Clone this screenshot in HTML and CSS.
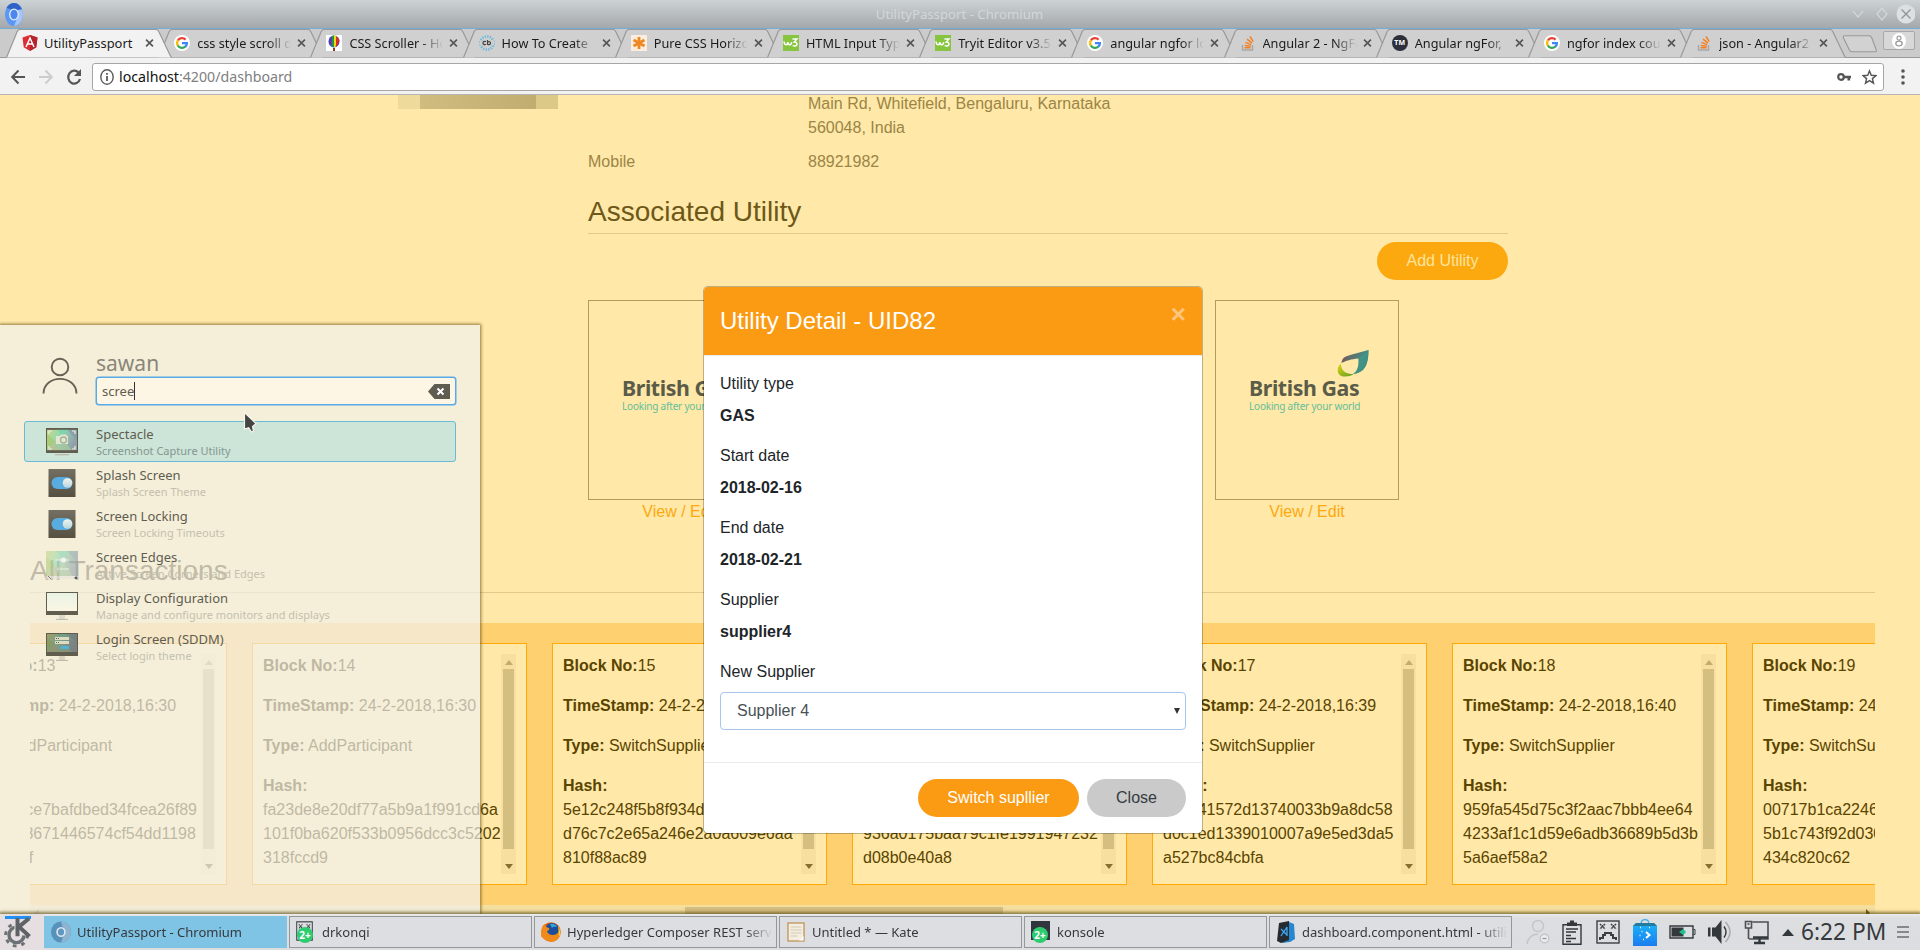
FILE: index.html
```html
<!DOCTYPE html>
<html lang="en">
<head>
<meta charset="utf-8">
<title>UtilityPassport - Chromium</title>
<link rel="stylesheet" href="styles.css">
</head>
<body>
<svg class="defs" width="0" height="0">
  <defs>
    <linearGradient id="leafTop" x1="0" y1="0" x2="1" y2=".4"><stop offset=".2" stop-color="#6d625f"/><stop offset=".75" stop-color="#4a8880"/><stop offset="1" stop-color="#3d7a72"/></linearGradient>
    <linearGradient id="leafLow" x1="0" y1="0" x2="1" y2="1"><stop offset="0" stop-color="#e0d613"/><stop offset="1" stop-color="#5c9a22"/></linearGradient>
    <linearGradient id="wall" x1="0" y1="0" x2="1" y2=".4"><stop offset="0" stop-color="#ccd57f"/><stop offset=".45" stop-color="#93d9b5"/><stop offset="1" stop-color="#92a0a9"/></linearGradient>
    <linearGradient id="dark" x1="0" y1="0" x2="0" y2="1"><stop offset="0" stop-color="#736f62"/><stop offset="1" stop-color="#555041"/></linearGradient>
    <linearGradient id="knob" x1="0" y1="0" x2="0" y2="1"><stop offset="0" stop-color="#f2f4ec"/><stop offset="1" stop-color="#b9d6dd"/></linearGradient>
    <linearGradient id="glass" x1="0" y1="0" x2="0" y2="1"><stop offset="0" stop-color="#e9f3e4"/><stop offset="1" stop-color="#fbf6e4"/></linearGradient>
    <linearGradient id="bag" x1="0" y1="0" x2="0" y2="1"><stop offset="0" stop-color="#1cb4f8"/><stop offset="1" stop-color="#1a7df0"/></linearGradient>
  </defs>
  <symbol id="tab" viewBox="0 0 166 29"><path d="M0.5 28.5 L11 3 Q12 .5 14 .5 H150 Q152 .5 153 3 L164 26 Q165 28.5 166 28.5" stroke="#999" stroke-width="1.2"/></symbol>
  <symbol id="x" viewBox="0 0 10 10"><path d="M1.2 1.2l7.6 7.6M8.8 1.2L1.2 8.8" stroke="#555" stroke-width="1.8"/></symbol>
  <symbol id="google" viewBox="0 0 16 16"><circle cx="8" cy="8" r="8" fill="#fff"/><g fill="none" stroke-width="2.3"><path d="M3.9 5.4A4.9 4.9 0 0 1 11.6 4.6" stroke="#ea4335"/><path d="M3.9 5.3a4.9 4.9 0 0 0 0 5.4" stroke="#fbbc05"/><path d="M3.8 10.5a4.9 4.9 0 0 0 7.6 1" stroke="#34a853"/><path d="M8 8.1h4.9a4.9 4.9 0 0 1-1.6 3.5" stroke="#4285f4"/></g></symbol>
  <symbol id="w3" viewBox="0 0 16 16"><rect width="16" height="16" fill="#87c540"/><path d="M1 6.5q.4 3.2 2 3.2t1.8-2.6q.2 2.6 1.8 2.6t2.2-2.5M9.5 4h4.4l-2.6 3q3 0 2.6 2.7-1.6 2.2-4.2.6" fill="none" stroke="#fff" stroke-width="1.5"/></symbol>
  <symbol id="so" viewBox="0 0 16 16"><path d="M2.5 10v5h10v-5" fill="none" stroke="#a5a8ab" stroke-width="1.4"/><path d="M4.5 12.8h6M4.7 10.4l6 .9M5.4 7.4l5.7 2.2M7 4.2l5 4M10 1.5l3.2 5.2" stroke="#f48024" stroke-width="1.5"/></symbol>
  <symbol id="toggle" viewBox="0 0 27 28"><rect width="27" height="28" fill="url(#dark)"/><rect x="3" y="8" width="21" height="12" rx="6" fill="#58ace0"/><circle cx="19" cy="14" r="4.8" fill="url(#knob)"/></symbol>
  <symbol id="wallpaper" viewBox="0 0 30 22" preserveAspectRatio="none"><rect width="30" height="22" fill="url(#wall)"/><path d="M0 5l8 7-8 10z" fill="#a9c763" opacity=".6"/><path d="M10 0l5 7 7-7z" fill="#78d3ac" opacity=".8"/><path d="M20 0l10 11V0z" fill="#8298a8" opacity=".7"/><path d="M8 22l8-12 9 12z" fill="#a8ca9c" opacity=".7"/><path d="M0 22l8-10 3 10z" fill="#d5b177" opacity=".5"/></symbol>
  <symbol id="pixelface" viewBox="0 0 24 24"><rect x="1" y="1" width="22" height="22" fill="none" stroke="#3a3f43" stroke-width="1.4"/><path d="M4 4l5 5M9 4L4 9M15 4l5 5M20 4l-5 5" stroke="#3a3f43" stroke-width="1.5" stroke-dasharray="1.8 .5"/><path d="M4 20v-2h3v-3h2v-2h6v2h2v3h3v2" fill="none" stroke="#3a3f43" stroke-width="2"/></symbol>
  <symbol id="leaf" viewBox="0 0 32 27"><path d="M4.5 13C5 8 8 6.500 14 4.800L31.500 0C31.500 14 28 23 16 24c5-3 6-9 5.500-15.500C14 9 9 11 4.500 13z" fill="url(#leafTop)"/><path d="M31.400 0C31.500 14 28 23 16 24c5-3 6-9 5.500-15.500z" fill="#419a8b" opacity=".65"/><path d="M4 13.500C-1.500 18 0 27 8 26.500c4 0 7-1 9-2.700C10 25 3.500 21 4 13.500z" fill="url(#leafLow)"/></symbol>
</svg>

<header class="titlebar">
  <svg class="app-icon" width="18" height="23" viewBox="0 0 18 23" preserveAspectRatio="none"><ellipse cx="9" cy="11.500" rx="9" ry="11.500" fill="#5b97f5"/><path d="M1.500 5A9 11.500 0 0 1 17 6.500L9 7z" fill="#2f62c8"/><path d="M17 6.500A9 11.500 0 0 1 9 23L13 13V7z" fill="#a5c5fb"/><ellipse cx="9" cy="11.500" rx="4.300" ry="5.400" fill="#4c87ee" stroke="#e3edfd" stroke-width="1.300"/></svg>
  <h1>UtilityPassport - Chromium</h1>
  <svg class="window-buttons" width="66" height="22" viewBox="0 0 66 22"><path d="M4 8l5 6 5-6M28 11l5-6 5 6-5 6z" fill="none" stroke="#d3d7da" stroke-width="1.200"/><circle cx="57" cy="11" r="9.500" fill="#dde0e2"/><path d="M52.500 6.500l9 9M61.500 6.500l-9 9" stroke="#8d9296" stroke-width="1.200"/></svg>
</header>

<nav class="tabs">
  <div class="tab active"><svg class="shape"><use href="#tab"/></svg><svg class="fav" viewBox="0 0 16 16"><path d="M8 0l7.500 2.600-1.200 9.600L8 16l-6.300-3.800L.5 2.600z" fill="#dd2c33"/><path d="M8 0l7.500 2.600-1.200 9.600L8 16z" fill="#b5232c"/><path d="M4 12L8 3l4 9M5.600 9h4.800" fill="none" stroke="#fff" stroke-width="1.500"/></svg><span>UtilityPassport</span><svg class="x"><use href="#x"/></svg></div>
  <div class="tab"><svg class="shape"><use href="#tab"/></svg><svg class="fav"><use href="#google"/></svg><span>css style scroll d</span><svg class="x"><use href="#x"/></svg></div>
  <div class="tab"><svg class="shape"><use href="#tab"/></svg><svg class="fav" viewBox="0 0 16 16"><rect width="16" height="16" fill="#fff"/><ellipse cx="8" cy="6.500" rx="5.500" ry="6" fill="#2b54d4"/><path d="M4 2.500h2v8L3 9z" fill="#7a27b0"/><path d="M6 .8h2v11.600L5.500 11z" fill="#1c9c3d"/><path d="M8 .5h2.500l-.5 11-2 1z" fill="#f4d91d"/><path d="M10.300 1L13.500 5 12 9.500 9.800 12z" fill="#df2a1c"/><path d="M7 13h2v3H7z" fill="#8a3f18"/></svg><span>CSS Scroller - Ho</span><svg class="x"><use href="#x"/></svg></div>
  <div class="tab"><svg class="shape"><use href="#tab"/></svg><svg class="fav" viewBox="0 0 16 16"><circle cx="8" cy="8" r="6.600" fill="none" stroke="#5fb8dd" stroke-width="2.600" stroke-dasharray="1.200 1.400"/><path d="M1 6h14v4H1z" fill="#cfcfcf"/><path d="M7 6.500q-3-.5-3 1.500t3 1.500M8.500 5v4.500q3 .5 3-1.500T8.500 7" fill="none" stroke="#444" stroke-width="1.200"/></svg><span>How To Create </span><svg class="x"><use href="#x"/></svg></div>
  <div class="tab"><svg class="shape"><use href="#tab"/></svg><svg class="fav" viewBox="0 0 16 16"><rect width="16" height="16" fill="#fbeede"/><path d="M8 2v12M2.500 5l11 6M13.500 5l-11 6" stroke="#ee8822" stroke-width="2.800"/></svg><span>Pure CSS Horizo</span><svg class="x"><use href="#x"/></svg></div>
  <div class="tab"><svg class="shape"><use href="#tab"/></svg><svg class="fav"><use href="#w3"/></svg><span>HTML Input Type</span><svg class="x"><use href="#x"/></svg></div>
  <div class="tab"><svg class="shape"><use href="#tab"/></svg><svg class="fav"><use href="#w3"/></svg><span>Tryit Editor v3.5</span><svg class="x"><use href="#x"/></svg></div>
  <div class="tab"><svg class="shape"><use href="#tab"/></svg><svg class="fav"><use href="#google"/></svg><span>angular ngfor lo</span><svg class="x"><use href="#x"/></svg></div>
  <div class="tab"><svg class="shape"><use href="#tab"/></svg><svg class="fav"><use href="#so"/></svg><span>Angular 2 - NgFo</span><svg class="x"><use href="#x"/></svg></div>
  <div class="tab"><svg class="shape"><use href="#tab"/></svg><i class="fav tm">TM</i><span>Angular ngFor, </span><svg class="x"><use href="#x"/></svg></div>
  <div class="tab"><svg class="shape"><use href="#tab"/></svg><svg class="fav"><use href="#google"/></svg><span>ngfor index cou</span><svg class="x"><use href="#x"/></svg></div>
  <div class="tab"><svg class="shape"><use href="#tab"/></svg><svg class="fav"><use href="#so"/></svg><span>json - Angular2 </span><svg class="x"><use href="#x"/></svg></div>
  <svg class="newtab" width="36" height="18" viewBox="0 0 36 18"><path d="M3 .7h24q2 0 2.700 2l4.500 12q.8 2-1.200 2H10q-2 0-2.700-2L1.300 2.700Q.7.700 3 .7z" fill="#d2d2d2" stroke="#999" stroke-width="1.100"/></svg>
  <div class="profile-btn"><svg width="14" height="16" viewBox="0 0 14 16"><ellipse cx="7" cy="8" rx="7" ry="8" fill="#fff"/><circle cx="7" cy="5.200" r="2" fill="none" stroke="#9b9b9b" stroke-width="1.200"/><ellipse cx="7" cy="10.500" rx="3.200" ry="2.400" fill="none" stroke="#9b9b9b" stroke-width="1.300"/></svg></div>
</nav>

<div class="toolbar">
  <svg class="nav-icons" width="74" height="20" viewBox="0 0 74 20" fill="none" stroke-width="2"><path d="M14 10H1.500M7.500 3.500L1.200 10l6.300 6.500" stroke="#555"/><path d="M28 10h12.500M34.500 3.500l6.300 6.500-6.300 6.500" stroke="#ccc"/><path d="M67.500 5.500a6 6.500 0 1 0 1.500 6.500" stroke="#555" stroke-width="2.200"/><path d="M70 2v7h-7z" fill="#555"/></svg>
  <div class="urlbar">
    <svg width="14" height="16" viewBox="0 0 14 16" preserveAspectRatio="none"><ellipse cx="7" cy="8" rx="6.200" ry="7.200" fill="none" stroke="#5a5a5a" stroke-width="1.400"/><path d="M7 7v5M7 4v1.800" stroke="#5a5a5a" stroke-width="1.800"/></svg>
    <p>localhost<span>:4200/dashboard</span></p>
    <svg class="key" width="14" height="10" viewBox="0 0 14 10"><circle cx="4" cy="5" r="2.800" fill="none" stroke="#555" stroke-width="2.200"/><path d="M6.500 5H14M11.800 5v3.600" stroke="#555" stroke-width="2.600"/></svg>
    <svg class="star" width="15" height="16" viewBox="0 0 16 16"><path d="M8 1.500l1.900 4.700 5 .3-3.800 3.200 1.200 4.900L8 11.900l-4.300 2.700 1.200-4.900L1.100 6.500l5-.3z" fill="none" stroke="#555" stroke-width="1.500"/></svg>
  </div>
  <svg class="dots" width="4" height="16" viewBox="0 0 4 16" fill="#555"><circle cx="2" cy="2" r="1.800"/><circle cx="2" cy="8" r="1.800"/><circle cx="2" cy="14" r="1.800"/></svg>
</div>

<main class="page">
  <div class="profile">
    <div class="photo"></div>
    <dl class="details">
      <dt></dt><dd>Main Rd, Whitefield, Bengaluru, Karnataka<br>560048, India</dd>
      <dt>Mobile</dt><dd>88921982</dd>
    </dl>
  </div>
  <section class="utilities">
    <h2>Associated Utility</h2>
    <button class="btn add">Add Utility</button>
    <div class="utility-list">
      <div class="utility"><div class="logo"><div class="brand"><svg width="32" height="27"><use href="#leaf"/></svg><b>British Gas</b><small>Looking after your world</small></div></div><a>View / Edit</a></div>
      <div class="utility"><div class="logo"><div class="brand"><svg width="32" height="27"><use href="#leaf"/></svg><b>British Gas</b><small>Looking after your world</small></div></div><a>View / Edit</a></div>
    </div>
  </section>
  <section class="transactions">
    <h2>All Transactions</h2>
    <div class="strip">
      <div class="blocks">
        <article class="block"><div class="text"><p><b>Block No:</b>13</p><p><b>TimeStamp:</b> 24-2-2018,16:30</p><p><b>Type:</b> AddParticipant</p><p><b>Hash:</b><br>88e1a04ce7bafdbed34fcea26f89<br>c0b243d8671446574cf54dd1198<br>0ae26fc4f</p></div><div class="bar"><i></i></div></article>
        <article class="block"><div class="text"><p><b>Block No:</b>14</p><p><b>TimeStamp:</b> 24-2-2018,16:30</p><p><b>Type:</b> AddParticipant</p><p><b>Hash:</b><br>fa23de8e20df77a5b9a1f991cd6a<br>101f0ba620f533b0956dcc3c5202<br>318fccd9</p></div><div class="bar"><i></i></div></article>
        <article class="block"><div class="text"><p><b>Block No:</b>15</p><p><b>TimeStamp:</b> 24-2-2018,16:32</p><p><b>Type:</b> SwitchSupplier</p><p><b>Hash:</b><br>5e12c248f5b8f934d0b1c7a3e42<br>d76c7c2e65a246e2a0a609e6aa<br>810f88ac89</p></div><div class="bar"><i></i></div></article>
        <article class="block"><div class="text"><p><b>Block No:</b>16</p><p><b>TimeStamp:</b> 24-2-2018,16:35</p><p><b>Type:</b> SwitchSupplier</p><p><b>Hash:</b><br>7b31d6f08e52ac94be03d1f5c6<br>936a0175baa79c1fe1991947232<br>d08b0e40a8</p></div><div class="bar"><i></i></div></article>
        <article class="block"><div class="text"><p><b>Block No:</b>17</p><p><b>TimeStamp:</b> 24-2-2018,16:39</p><p><b>Type:</b> SwitchSupplier</p><p><b>Hash:</b><br>e80c41572d13740033b9a8dc58<br>d0c1ed1339010007a9e5ed3da5<br>a527bc84cbfa</p></div><div class="bar"><i></i></div></article>
        <article class="block"><div class="text"><p><b>Block No:</b>18</p><p><b>TimeStamp:</b> 24-2-2018,16:40</p><p><b>Type:</b> SwitchSupplier</p><p><b>Hash:</b><br>959fa545d75c3f2aac7bbb4ee64<br>4233af1c1d59e6adb36689b5d3b<br>5a6aef58a2</p></div><div class="bar"><i></i></div></article>
        <article class="block"><div class="text"><p><b>Block No:</b>19</p><p><b>TimeStamp:</b> 24-2-2018,16:42</p><p><b>Type:</b> SwitchSupplier</p><p><b>Hash:</b><br>00717b1ca2246e90f3d5b8ac17<br>5b1c743f92d030e6b8fa4c21de7<br>434c820c62</p></div><div class="bar"><i></i></div></article>
      </div>
      <div class="hbar"><i></i></div>
    </div>
  </section>
</main>

<div class="modal">
  <div class="modal-head"><h3>Utility Detail - UID82</h3><span>×</span></div>
  <div class="modal-body">
    <p>Utility type</p><b>GAS</b>
    <p>Start date</p><b>2018-02-16</b>
    <p>End date</p><b>2018-02-21</b>
    <p>Supplier</p><b>supplier4</b>
    <p>New Supplier</p>
    <div class="select"><span>Supplier 4</span><i></i></div>
  </div>
  <div class="modal-foot"><button class="btn switch">Switch supllier</button><button class="btn close">Close</button></div>
</div>

<aside class="launcher">
  <div class="user">
    <svg width="36" height="38" viewBox="0 0 36 38" fill="none" stroke="#666354" stroke-width="1.900"><circle cx="18" cy="10" r="8.300"/><path d="M1.500 36.500C2 17 34 17 34.500 36.500"/></svg>
    <div class="who"><strong>sawan</strong>
      <div class="search"><span>scree</span><svg width="22" height="15" viewBox="0 0 22 15"><path d="M0 7.500L6.500 0H22v15H6.500z" fill="#5f5d51"/><path d="M9.500 4.500l6 6M15.500 4.500l-6 6" stroke="#fff" stroke-width="2"/></svg></div>
    </div>
  </div>
  <ul class="results">
    <li class="selected"><svg width="32" height="28" viewBox="0 0 32 28"><rect width="32" height="25" fill="#615e50"/><svg x="1" y="1.500" width="30" height="21"><use href="#wallpaper"/></svg><path d="M3 6V3h3M26 3h3v3M3 18v3h3M29 18v3h-3" fill="none" stroke="#e8efda" stroke-width="1.200"/><path d="M10 8h4l1-1.500h5L21 8h1v8H10z" fill="#e6e6cf"/><circle cx="17.500" cy="12" r="3" fill="none" stroke="#9db59a" stroke-width="1.400"/><path d="M9 26.700h14" stroke="#b9b4a4" stroke-width="1.200"/></svg><div><b>Spectacle</b><small>Screenshot Capture Utility</small></div></li>
    <li><svg width="32" height="28"><use href="#toggle"/></svg><div><b>Splash Screen</b><small>Splash Screen Theme</small></div></li>
    <li><svg width="32" height="28"><use href="#toggle"/></svg><div><b>Screen Locking</b><small>Screen Locking Timeouts</small></div></li>
    <li><svg width="32" height="28" viewBox="0 0 32 28"><g opacity=".6"><svg width="32" height="25"><use href="#wallpaper"/></svg><path d="M0 25h32v3H0z" fill="#e5e4dc"/></g><path d="M9 9h14M11 18h12" stroke="#eef0e8" stroke-width="1.200"/><circle cx="17.500" cy="9" r="2.600" fill="#f2f3ec"/><circle cx="11.500" cy="18" r="2" fill="none" stroke="#c8ccb9"/><path d="M2 25l3 3M29 26h2v2h-2z" stroke="#777"/></svg><div><b>Screen Edges</b><small>Active Screen Corners and Edges</small></div></li>
    <li><svg width="32" height="28" viewBox="0 0 32 28"><rect width="32" height="23" fill="#615e50"/><rect x="1" y="1" width="30" height="18" fill="url(#glass)"/><path d="M13 23h6v4h-6z" fill="#dcd9cf"/><path d="M10 27.400h12" stroke="#bbb8ab"/></svg><div><b>Display Configuration</b><small>Manage and configure monitors and displays</small></div></li>
    <li><svg width="32" height="28" viewBox="0 0 32 28"><rect width="32" height="23" fill="#615e50"/><svg x="1" y="1" width="30" height="18" opacity=".55"><use href="#wallpaper"/></svg><path d="M9 4h14v3H9zM9 8h14v3H9z" fill="#dedbc5"/><path d="M15 13h8v3h-8z" fill="#4db2dc"/><path d="M10 5.500h4M10 9.500h4" stroke="#615e50" stroke-dasharray="1 1"/><path d="M13 23h6v4h-6z" fill="#dcd2bf"/><path d="M10 27.400h12" stroke="#b5b2a6"/></svg><div><b>Login Screen (SDDM)</b><small>Select login theme</small></div></li>
  </ul>
</aside>

<svg class="pointer" width="16" height="24" viewBox="0 0 16 24"><path d="M1.500 1.500V18l4.200-1.200 2.800 4.200 2-1-1-4.200L13 12.500z" fill="#454545" stroke="#f7f4e8" stroke-width="1.200"/></svg>

<footer class="taskbar">
  <div class="kicker"><svg width="28" height="33" viewBox="0 0 28 34" preserveAspectRatio="none"><ellipse cx="12.500" cy="20.500" rx="7.500" ry="8" fill="none" stroke="#6b7175" stroke-width="3.400"/><ellipse cx="12.500" cy="20.500" rx="10.800" ry="11.500" fill="none" stroke="#6b7175" stroke-width="3" stroke-dasharray="3.700 5"/><path d="M10.500 4.500h16V21h-16z" fill="#e6dfe1"/><path d="M13.500 3v19M25 3.500L15 12l10.500 10" fill="none" stroke="#5c6266" stroke-width="4"/></svg></div>
  <div class="tasks">
    <div class="task current"><svg width="19" height="22" viewBox="0 0 18 22" preserveAspectRatio="none"><ellipse cx="9" cy="11" rx="9" ry="10.500" fill="#5792bb"/><path d="M9 .5A9 10.500 0 0 1 9 21.500L12 12z" fill="#8fb4d0"/><ellipse cx="9" cy="11" rx="3.500" ry="4.300" fill="#5f97be" stroke="#dbe8f1" stroke-width="1.500"/></svg><span>UtilityPassport - Chromium</span></div>
    <div class="task"><div class="stack"><svg width="17" height="20" viewBox="0 0 24 24" preserveAspectRatio="none"><use href="#pixelface"/></svg><em>2+</em></div><span>drkonqi</span></div>
    <div class="task"><svg width="20" height="22" viewBox="0 0 20 22"><circle cx="10" cy="11" r="9.800" fill="#e66000"/><circle cx="11" cy="9" r="7" fill="#1b4f9c"/><path d="M9 3q5-1 7 3-4-1-5 1z" fill="#33a5dc"/><path d="M.5 9Q1 4 4 3q0 3 4 4 1 2-2 3 1 4 6 4 4 0 6-4 2 6-3 9.500T3 18 .5 9z" fill="#f08a1b"/><path d="M17 5q4 6 1 11 0-5-1-11z" fill="#fcd12a"/></svg><span>Hyperledger Composer REST serv</span></div>
    <div class="task"><svg width="19" height="20" viewBox="0 0 19 20"><rect x="1.500" y="1" width="16" height="18" fill="#f3eedf" stroke="#c49a62" stroke-width="1.400"/><path d="M4 5h11M4 8h11M4 11h11M4 14h7" stroke="#d3cab5"/><path d="M17 14v4.500h-4.500z" fill="#fff"/></svg><span>Untitled * — Kate</span></div>
    <div class="task"><div class="stack"><svg width="19" height="19" viewBox="0 0 19 19"><rect width="19" height="19" fill="#30383e"/><path d="M8 6l3 2.500L8 11" fill="none" stroke="#aab"/></svg><em>2+</em></div><span>konsole</span></div>
    <div class="task"><svg width="20" height="22" viewBox="0 0 20 22"><path d="M3 2l10-2 2 20-10 2-4-2z" fill="#252b31"/><path d="M13 1l5 2 1 15-5 3-9 1 8-3z" fill="#2686cf"/><path d="M5 8l6 6M11 6l-6 9M11 6v9" stroke="#3fa9f5" stroke-width="1.300"/></svg><span>dashboard.component.html - utili</span></div>
  </div>
  <div class="tray">
    <svg width="24" height="26" viewBox="0 0 24 26" fill="none" stroke="#c3c5c7" stroke-width="1.400"><circle cx="12" cy="7" r="5.500"/><path d="M1 25q1-9 11-10"/><circle cx="18.500" cy="19.500" r="4.300" fill="#eee"/><path d="M16.500 19.500h4" stroke="#999"/></svg>
    <svg width="20" height="25" viewBox="0 0 20 25" fill="none" stroke="#33383c" stroke-width="1.400"><path d="M1 4.700h18v19.600H1z"/><path d="M5 2.500h3V.5h4v2h3V6H5z" fill="#33383c" stroke="none"/><path d="M4 9h12M4 12h10M4 15.500h5M4 18.500h10M4 21.500h5"/></svg>
    <svg class="face" width="24" height="24"><use href="#pixelface"/></svg>
    <svg width="24" height="27" viewBox="0 0 24 27"><path d="M8 5q0-4.300 4-4.300T16 5" fill="none" stroke="#3daee9" stroke-width="1.200"/><path d="M0 7l3-3h18l3 3v20H0z" fill="url(#bag)"/><path d="M0 7l3-3h18l3 3z" fill="#257b9e"/><path d="M13 13l3.500 3-3.500 3" fill="none" stroke="#fff" stroke-width="2"/><path d="M8.500 12.500h1M6.500 16.500h1M10 20.500h1M7 8.500h1M16 8.500h1" stroke="#e5f6ff" stroke-width="1.500"/></svg>
    <svg width="27" height="14" viewBox="0 0 27 14"><path d="M1 1h23v12H1z" fill="none" stroke="#33383c" stroke-width="1.400"/><path d="M24.500 4.500H26v5h-1.500" fill="none" stroke="#33383c"/><path d="M2.500 2.500h12v9h-12z" fill="#33383c"/><path d="M10 7l5-3.500v2h1.500v3H15v2z" fill="#20bf8f"/></svg>
    <svg width="24" height="24" viewBox="0 0 24 24"><path d="M0 7.500h2.500v9H0zM4 7.500h3.500L13.500 0v24L7.500 16.500H4z" fill="#33383c"/><path d="M16 6.500q4 5.500 0 11" fill="none" stroke="#33383c" stroke-width="1.400"/><path d="M17.500 2q9 10 0 20" fill="none" stroke="#a6a9ac" stroke-width="1.400"/></svg>
    <svg width="25" height="25" viewBox="0 0 25 25" fill="none" stroke="#4b5054" stroke-width="1.600"><path d="M8.500 2H24v17H5M1.500 1.500h6V8h-6zM4.500 8v11"/><path d="M24 17.500H9M15.500 18v4.500M10 23h11" stroke="#33383c" stroke-width="2.400"/><path d="M3.500 4h2" /></svg>
    <svg class="up" width="12" height="7"><path d="M0 7l6-7 6 7z" fill="#33383c"/></svg>
    <time>6:22 PM</time>
    <svg class="burger" width="12" height="12" stroke="#85898c" stroke-width="1.800"><path d="M0 1h12M0 6h12M0 11h12"/></svg>
  </div>
</footer>
</body>
</html>
```

FILE: styles.css
```css
* { box-sizing: border-box; }
body {
  margin: 0;
  width: 1920px;
  height: 950px;
  overflow: hidden;
  position: relative;
  display: flex;
  flex-direction: column;
  font: 16px/24px "Liberation Sans", Arial, sans-serif;
  background: #ffe8a8;
}
h1, h2, h3, p, dl, dd, ul { margin: 0; padding: 0; font-weight: normal; }
.defs { position: absolute; }
svg { flex: none; }

/* window frame */
.titlebar {
  flex: 0 0 28px;
  display: flex;
  align-items: center;
  justify-content: space-between;
  padding: 0 5px 0 5px;
  background: linear-gradient(#cdd2d5, #a4a8ac);
}
.titlebar h1 {
  font: 13.200px/22px "Noto Sans", sans-serif;
  color: #d3d7da;
  margin-left: 47px;
}

.tabs {
  flex: 0 0 29px;
  display: flex;
  padding-left: 6px;
  background: #cbcbcb;
  border-top: 1px solid #72aed3;
  border-bottom: 1px solid #999;
}
.tab {
  position: relative;
  flex: 0 0 152.200px;
  height: 28px;
  display: flex;
  align-items: center;
  padding-left: 16px;
  font: 12.700px/28px "Noto Sans", sans-serif;
  color: #1b1b1b;
}
.shape { position: absolute; left: 0; top: 0; width: 166px; height: 29px; fill: #d0d0d0; overflow: visible; }
.active .shape { fill: #f2f2f2; z-index: 1; }
.active { z-index: 3; font-size: 12.900px; }
.fav { position: relative; z-index: 2; width: 16px; height: 16px; margin-right: 7px; }
.tm { border-radius: 50%; background: #2d303a; color: #fff; font: bold 7px/16px "Noto Sans", sans-serif; text-align: center; flex: none; }
.tab span {
  position: relative;
  z-index: 2;
  width: 94px;
  overflow: hidden;
  white-space: pre;
  -webkit-mask-image: linear-gradient(90deg, #000 76%, transparent);
  mask-image: linear-gradient(90deg, #000 76%, transparent);
}
.active .fav { margin-right: 6px; }
.active span { width: 95px; -webkit-mask-image: none; mask-image: none; }
.x { position: relative; z-index: 2; width: 9px; height: 10px; margin-left: 6px; }
.newtab { margin: 6px 0 0 10px; }
.profile-btn {
  width: 32px; height: 19px; margin: 2px 0 0 5px;
  display: flex; align-items: center; justify-content: center;
  background: #d8d8d8; border: 1px solid #a8a8a8; border-radius: 2px;
}

.toolbar {
  flex: 0 0 37px;
  display: flex;
  align-items: center;
  padding: 1px 15px 0 11px;
  background: #f2f2f2;
  border-bottom: 1px solid #b6b4b6;
}
.urlbar {
  width: 1792px; height: 28px; margin: 0 17px 0 7px; padding: 0 6px 0 7px;
  display: flex; align-items: center;
  background: #fff; border: 1px solid #a6a6a6; border-radius: 3px;
  font: 14.200px/26px "Noto Sans", sans-serif;
  color: #111;
}
.urlbar p { margin-left: 5px; flex: 1; }
.urlbar p span { color: #808080; }
.star { margin-left: 11px; }

/* page */
.page { flex: 1; min-height: 0; overflow: hidden; background: #ffe8a8; }
.profile { display: flex; margin-top: -4px; padding-left: 398px; color: #9b8546; }
.photo {
  width: 160px; height: 18px; margin-right: 30px;
  background: linear-gradient(90deg, #eedb9c 22px, #cfbc7e 22px, #c2ad71 138px, #dcc887 138px);
}
.details { display: grid; grid-template-columns: 220px 700px; row-gap: 10px; padding-top: 1px; }
.utilities { margin: 19px 0 0 588px; width: 920px; display: flex; flex-direction: column; }
h2 { font-size: 28px; line-height: 38px; }
.utilities h2 { color: #6d5818; border-bottom: 1px solid #dfca8d; height: 41px; }
.btn { font: 16px/24px "Liberation Sans", Arial, sans-serif; border: 0; height: 38px; border-radius: 19px; padding: 0; }
.add { align-self: flex-end; width: 131px; margin-top: 8px; background: #fca80f; color: #ffe49c; }
.utility-list { display: flex; justify-content: space-between; margin-top: 20px; padding-right: 109px; }
.utility { width: 184px; text-align: center; color: #fca80f; }
.logo { height: 200px; border: 1px solid #b09c5c; display: flex; justify-content: center; align-items: center; }
.brand { width: 120px; height: 64px; margin: -36px 0 0 4px; display: flex; flex-direction: column; font-family: "Noto Sans", sans-serif; text-align: left; white-space: nowrap; }
.brand svg { align-self: flex-end; }
.brand b { font-size: 21.300px; line-height: 22px; color: #5a5c48; letter-spacing: -.4px; }
.brand small { font-size: 10px; line-height: 15px; color: #5fbf9b; letter-spacing: -.2px; }
.transactions { margin: 28px 45px 0 30px; }
.transactions h2 { color: #5f4b10; height: 41px; border-bottom: 1px solid #dfca8d; }
.strip { margin-top: 30px; height: 296px; overflow: hidden; background: #ffd070; }
.blocks { display: flex; gap: 25px; margin-left: -78px; padding-top: 20px; height: 282px; width: 2200px; }
.block {
  flex: 0 0 275px; height: 242px; padding: 10px;
  display: flex;
  background: #ffe8a8; border: 1px solid #ffa80a; color: #594400;
}
.text p { margin-bottom: 16px; white-space: nowrap; }
.text { width: 238px; }
.bar { width: 15px; height: 220px; padding-top: 15px; background: #f7dfa0; position: relative; flex: none; }
.bar i { display: block; width: 11px; height: 180px; margin: 0 auto; background: #d5bf80; }
.bar::before, .bar::after { content: ""; position: absolute; left: 4px; border: 4px solid transparent; }
.bar::before { border-bottom: 5px solid #c3ad6b; border-top: 0; top: 6px; }
.bar::after { bottom: 5px; border-top: 5px solid #857030; border-bottom: 0; }
.hbar { height: 15px; background: #f5df9f; padding: 2px 0 0 655px; position: relative; }
.hbar i { display: block; width: 318px; height: 12px; background: #d5bf80; }
.hbar::before { content: ""; position: absolute; left: 4px; top: 4px; border: 4px solid transparent; border-right: 5px solid #c3ad6b; border-left: 0; }
.hbar::after { content: ""; position: absolute; right: 5px; top: 4px; border: 4px solid transparent; border-left: 4px solid #6c5818; border-right: 0; }

/* dialog */
.modal {
  position: absolute; left: 703px; top: 286px; width: 500px; height: 548px;
  display: flex; flex-direction: column;
  background: #fff; background-clip: padding-box;
  border: 1px solid rgba(0, 0, 0, .25); border-radius: 5px;
  color: #212529;
}
.modal-head {
  height: 69px; padding: 16px 16px 15px; display: flex; justify-content: space-between;
  background: #fb9a13; color: #fff; border-bottom: 1px solid #e9ecef; border-radius: 4px 4px 0 0;
}
.modal-head h3 { font-size: 24px; line-height: 36px; }
.modal-head span { font-size: 26px; font-weight: bold; line-height: 23px; color: #fdc67c; }
.modal-body { flex: 1; padding: 16px 16px; display: flex; flex-direction: column; }
.modal-body p, .modal-body b { height: 24px; }
.modal-body b { margin: 8px 0 16px; }
.select {
  display: flex; align-items: center; justify-content: space-between;
  height: 38px; margin-top: 8px; padding: 0 5px 0 16px;
  border: 1px solid #a9c6ea; border-radius: 4px; color: #495057;
}
.select i { border: 3px solid transparent; border-top: 6px solid #333; border-bottom: 0; }
.modal-foot { height: 71px; padding: 16px 16px; display: flex; justify-content: flex-end; gap: 8px; border-top: 1px solid #e9ecef; }
.switch { width: 161px; background: #fb9a13; color: #fff; }
.close { width: 99px; background: #cacaca; color: #343a40; }

/* application launcher */
.launcher {
  position: absolute; left: 0; top: 325px; width: 480px; height: 589px;
  padding: 26px 24px 0 24px;
  background: rgba(240, 241, 241, .67);
  box-shadow: 0 0 3px 1px rgba(90, 70, 10, .7);
  clip-path: inset(-4px -4px 0 0);
  font-family: "Noto Sans", sans-serif;
}
.user { display: flex; padding-left: 18px; height: 70px; }
.user svg { margin-top: 6px; }
.who { margin-left: 18px; flex: 1; }
.who strong { display: block; font: 21px/24px "Noto Sans", sans-serif; color: #89867a; margin-bottom: 2px; }
.search {
  height: 28px; display: flex; align-items: center; justify-content: space-between;
  padding: 0 5px; background: #fef6e4; border: 1px solid #58a9e8; border-radius: 3px;
  box-shadow: 0 0 0 .5px #58a9e8;
  font-size: 13px; color: #5f5d51;
}
.search svg { margin: 0; }
.search span { border-right: 1px solid #333; line-height: 18px; }
.results { list-style: none; }
.results li { display: flex; height: 41px; padding-left: 21px; border: 1px solid transparent; border-radius: 3px; }
.results .selected { background: rgba(150, 212, 215, .42); border-color: #69bbd6; }
.results svg { margin-top: 6px; }
.results svg svg { margin: 0; }
.results div { margin-left: 18px; }
.results b { display: block; font-weight: normal; font-size: 13px; line-height: 18px; margin-top: 3px; color: #5f5d51; }
.results small { display: block; font-size: 11px; line-height: 15px; color: #c4bfae; }
.results .selected small { color: #849890; }
.pointer { position: absolute; left: 243px; top: 411px; }

/* taskbar */
.taskbar {
  flex: 0 0 36px; height: 36px; min-height: 0; position: relative;
  display: flex;
  background: linear-gradient(#eaebec, #dcdee0 4px, #dbdde0);
  box-shadow: 0 -1px 3px 1px rgba(90, 75, 20, .7);
  font: 13px/32px "Noto Sans", sans-serif;
  color: #35393d;
}
.kicker { width: 44px; height: 36px; background: #e6dfe1; padding: 1px 0 0 4px; }
.kicker::before { content: ""; position: absolute; left: 5px; top: 2px; width: 26px; height: 3px; background: #2090f5; }
.kicker svg { position: relative; display: block; }
.tasks { display: flex; gap: 2px; padding-top: 2px; }
.task {
  width: 243px; height: 32px; padding-left: 6px;
  display: flex; align-items: center;
  border: 1px solid #94989b; background: #dddee1; overflow: hidden; white-space: nowrap;
}
.current { background: #7fc3e5; border-color: #7fc3e5; }
.task > svg, .stack { width: 20px; margin-right: 6px; }
.task span { flex: 1; overflow: hidden; line-height: 30px; margin-right: 3px; -webkit-mask-image: linear-gradient(90deg, #000 86%, transparent); mask-image: linear-gradient(90deg, #000 86%, transparent); }
.stack { position: relative; height: 22px; flex: none; }
.stack svg { display: block; }
.stack em {
  position: absolute; left: 1px; top: 6px; width: 16px; height: 16px; border-radius: 50%;
  background: #2ecc71; color: #fff; font: bold 10px/16px "Noto Sans", sans-serif; text-align: center;
}
.tray { display: flex; align-items: center; height: 36px; padding-left: 14px; gap: 12px; }
.tray .face { margin: 0 1px 0 2px; }
.tray time { font-size: 22.700px; line-height: 34px; white-space: nowrap; margin-left: -5px; }
.tray .up { margin-left: 1px; }
.burger { margin-left: -1px; }
```
